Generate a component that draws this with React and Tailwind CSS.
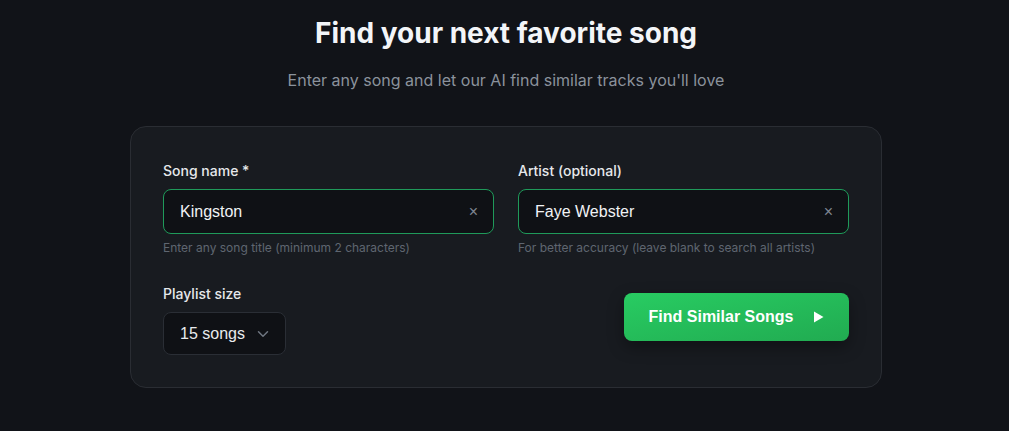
import { useState } from 'react';

const ClearButton = ({ onClick }) => (
  <button
    type="button"
    onClick={onClick}
    className="absolute right-4 top-1/2 -translate-y-1/2 text-[#7f8792] text-[16px] leading-none font-['Liberation_Sans',sans-serif]"
  >
    ×
  </button>
);

const App = () => {
  const [song, setSong] = useState('Kingston');
  const [artist, setArtist] = useState('Faye Webster');
  const [size, setSize] = useState('15');

  return (
    <div className="min-h-[431px] w-full bg-[#111318] font-['Inter',sans-serif] flex flex-col items-center pt-[15px] pl-[3px]">
      {/* HEADER */}
      <h1 className="text-[28px] leading-[36px] font-bold text-[#f3f5f8]">Find your next favorite song</h1>
      <p className="mt-[17px] text-[16px] leading-[24px] text-[#8b929c]">Enter any song and let our AI find similar tracks you'll love</p>

      {/* FORM CARD */}
      <div className="mt-[34px] w-[752px] rounded-2xl border border-[#2a2d33] bg-[#181b20] px-8 pt-[34px] pb-8">
        <div className="grid grid-cols-2 gap-6">
          <div>
            <label className="block mb-2 text-sm leading-5 font-medium text-[#e6e8eb]">Song name *</label>
            <div className="relative">
              <input
                value={song}
                onChange={(e) => setSong(e.target.value)}
                className="w-full h-[45px] rounded-lg border border-[#1f9a5a] bg-[#0f1115] pl-4 pr-10 text-[16px] text-[#f1f3f5] outline-none font-['Liberation_Sans',sans-serif]"
              />
              <ClearButton onClick={() => setSong('')} />
            </div>
            <p className="mt-1.5 text-xs leading-4 text-[#5f6670]">Enter any song title (minimum 2 characters)</p>
          </div>
          <div>
            <label className="block mb-2 text-sm leading-5 font-medium text-[#e6e8eb]">Artist (optional)</label>
            <div className="relative">
              <input
                value={artist}
                onChange={(e) => setArtist(e.target.value)}
                className="w-full h-[45px] rounded-lg border border-[#1f9a5a] bg-[#0f1115] pl-4 pr-10 text-[16px] text-[#f1f3f5] outline-none font-['Liberation_Sans',sans-serif]"
              />
              <ClearButton onClick={() => setArtist('')} />
            </div>
            <p className="mt-1.5 text-xs leading-4 text-[#5f6670]">For better accuracy (leave blank to search all artists)</p>
          </div>
        </div>

        <div className="mt-7 flex items-start justify-between">
          <div>
            <label className="block mb-2 text-sm leading-5 font-medium text-[#e6e8eb]">Playlist size</label>
            <div className="relative w-[123px]">
              <select
                value={size}
                onChange={(e) => setSize(e.target.value)}
                className="appearance-none w-full h-[43px] rounded-lg border border-[#2a2e35] bg-[#0f1115] pl-4 text-[16px] text-[#e8eaed] outline-none font-['Liberation_Sans',sans-serif]"
              >
                <option value="10">10 songs</option>
                <option value="15">15 songs</option>
                <option value="20">20 songs</option>
              </select>
              <svg className="pointer-events-none absolute right-[14px] top-1/2 -translate-y-1/2" width="18" height="18" viewBox="0 0 24 24" fill="none" stroke="#6f7680" strokeWidth="2" strokeLinecap="round" strokeLinejoin="round">
                <path d="M6 9l6 6 6-6" />
              </svg>
            </div>
          </div>

          <button
            type="button"
            className="mt-[9px] w-[225px] h-12 rounded-lg bg-gradient-to-br from-[#28cc62] to-[#21ab51] shadow-[0_6px_16px_rgba(0,0,0,0.35)] flex items-center justify-center gap-[20px] text-white text-[16px] font-bold font-['Liberation_Sans',sans-serif]"
          >
            Find Similar Songs
            <svg width="11" height="12" viewBox="0 0 11 12" fill="white">
              <path d="M1 0.5 L10.5 6 L1 11.5 Z" />
            </svg>
          </button>
        </div>
      </div>
    </div>
  );
};

export default App;
